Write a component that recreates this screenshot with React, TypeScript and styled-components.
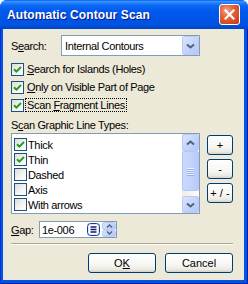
import React from "react";
import styled, { createGlobalStyle } from "styled-components";

const GlobalStyle = createGlobalStyle`
  * { box-sizing: border-box; }
  html, body { margin: 0; padding: 0; background: #ffffff; }
  body { font-family: "Liberation Sans", Arial, sans-serif; }
`;

const Window = styled.div`
  width: 248px;
  height: 284px;
  display: flex;
  flex-direction: column;
  background: #0831d9;
  border-radius: 7px 7px 0 0;
  overflow: hidden;
`;

const TitleBar = styled.div`
  height: 29px;
  flex: none;
  display: flex;
  align-items: center;
  justify-content: space-between;
  padding: 0 8px 0 7px;
  background: linear-gradient(
    to bottom,
    #0058ee 0%,
    #3d95ff 5%,
    #2080fb 10%,
    #0a66f2 20%,
    #0058ee 40%,
    #0055e5 70%,
    #0052dd 88%,
    #0043c4 100%
  );
`;

const Title = styled.span`
  color: #ffffff;
  font-weight: bold;
  font-size: 12px;
  letter-spacing: 0.1px;
  text-shadow: 1px 1px 0 #0a1883;
`;

const CloseButton = styled.div`
  width: 21px;
  height: 21px;
  border: 1px solid #ffffff;
  border-radius: 3px;
  background: radial-gradient(circle at 35% 30%, #f3a287 0%, #e5683f 35%, #d2461f 75%, #c0391a 100%);
  display: flex;
  align-items: center;
  justify-content: center;
`;

const Frame = styled.div`
  flex: 1;
  display: flex;
  padding: 0 4px 4px 3px;
  background: #0054e3;
  box-shadow: inset 1px 0 #0831d9, inset -1px 0 #001ea0, inset 0 -1px #001ea0;
`;

const Body = styled.div`
  flex: 1;
  background: #ece9d8;
  display: flex;
  flex-direction: column;
  padding: 6px 11px 0 8px;
  font-size: 11px;
  letter-spacing: -0.35px;
  color: #000000;
`;

const Row = styled.div<{ $top?: number; $h?: number }>`
  display: flex;
  align-items: center;
  height: ${(p) => p.$h ?? 18}px;
  margin-top: ${(p) => p.$top ?? 0}px;
`;

const FieldLabel = styled.span<{ $w: number }>`
  width: ${(p) => p.$w}px;
  flex: none;
`;

const Combo = styled.div`
  width: 139px;
  height: 21px;
  border: 1px solid #7f9db9;
  background: #ffffff;
  display: flex;
  align-items: stretch;
`;

const ComboText = styled.span`
  flex: 1;
  padding-left: 3px;
  display: flex;
  align-items: center;
`;

const XpArrowBtn = styled.div<{ $w?: number; $h?: number }>`
  width: ${(p) => p.$w ?? 17}px;
  height: ${(p) => (p.$h ? `${p.$h}px` : "auto")};
  flex: none;
  border: 1px solid #bccbf2;
  border-radius: 2px;
  background: linear-gradient(135deg, #dbe6fe 0%, #c7d6fb 45%, #b2c6f5 100%);
  display: flex;
  align-items: center;
  justify-content: center;
`;

const CheckRows = styled.div`
  display: flex;
  flex-direction: column;
  margin-top: 4px;
`;

const Box = styled.span`
  width: 13px;
  height: 13px;
  flex: none;
  border: 1px solid #1c5180;
  background: linear-gradient(135deg, #dcdcd7 0%, #f4f4f1 55%, #ffffff 100%);
  display: inline-flex;
  align-items: center;
  justify-content: center;
`;

const CheckLabel = styled.span<{ $focus?: boolean }>`
  margin-left: 2px;
  padding: 0 1px;
  line-height: 12px;
  outline: ${(p) => (p.$focus ? "1px dotted #000" : "none")};
`;

const Section = styled.div`
  margin-top: 4px;
  height: 14px;
  line-height: 14px;
`;

const ListArea = styled.div`
  display: flex;
  gap: 7px;
  margin-top: 1px;
`;

const ListBox = styled.div`
  width: 189px;
  height: 81px;
  border: 1px solid #7f9db9;
  background: #ffffff;
  display: flex;
`;

const Items = styled.div`
  flex: 1;
  padding: 3px 0 0 2px;
  overflow: hidden;
`;

const Item = styled.div`
  height: 15px;
  display: flex;
  align-items: center;
  gap: 1px;
`;

const ScrollBar = styled.div`
  width: 17px;
  flex: none;
  display: flex;
  flex-direction: column;
  background: linear-gradient(to right, #eeede5, #fdfdfa);
`;

const Track = styled.div`
  flex: 1;
  display: flex;
  flex-direction: column;
`;

const Thumb = styled.div`
  height: 40px;
  border: 1px solid #b4c8f6;
  border-radius: 2px;
  background: linear-gradient(to right, #cad8fc 0%, #c2d3fc 50%, #b8cbf9 100%);
  display: flex;
  flex-direction: column;
  align-items: center;
  justify-content: center;
  gap: 1px;
`;

const Grip = styled.span`
  width: 7px;
  height: 1px;
  background: #eef4fe;
  box-shadow: 0 1px 0 #8cb0f8;
`;

const SideButtons = styled.div`
  display: flex;
  flex-direction: column;
  gap: 4px;
  padding-top: 2px;
`;

const XpButton = styled.div<{ $w: number }>`
  width: ${(p) => p.$w}px;
  height: 20px;
  border: 1px solid #003c74;
  border-radius: 3px;
  background: linear-gradient(to bottom, #ffffff 0%, #f6f6f2 60%, #ecebe5 85%, #d6d0c5 100%);
  display: flex;
  align-items: center;
  justify-content: center;
  letter-spacing: 0;
`;

const Edit = styled.div`
  width: 78px;
  height: 17px;
  border: 1px solid #7f9db9;
  background: #ffffff;
  display: flex;
  align-items: center;
`;

const EditText = styled.span`
  flex: 1;
  padding-left: 2px;
`;

const Spin = styled.div`
  width: 14px;
  align-self: stretch;
  display: flex;
  flex-direction: column;
`;

const SpinHalf = styled.div`
  flex: 1;
  border: 1px solid #bccbf2;
  border-radius: 2px;
  background: linear-gradient(135deg, #dbe6fe 0%, #c7d6fb 45%, #b2c6f5 100%);
  display: flex;
  align-items: center;
  justify-content: center;
`;

const Separator = styled.div`
  margin-top: 5px;
  height: 2px;
  border-top: 1px solid #aca899;
  border-bottom: 1px solid #ffffff;
`;

const ButtonRow = styled.div`
  margin-top: 8px;
  display: flex;
  justify-content: flex-end;
  gap: 9px;
`;

const Chevron = ({ up = false, w = 7 }: { up?: boolean; w?: number }) => (
  <svg width={w + 2} height="6" viewBox={`0 0 ${w + 2} 6`}>
    <path
      d={up ? `M1 4.5 L${(w + 2) / 2} 1.5 L${w + 1} 4.5` : `M1 1.5 L${(w + 2) / 2} 4.5 L${w + 1} 1.5`}
      fill="none"
      stroke="#4d6185"
      strokeWidth="2"
    />
  </svg>
);

const SmallChevron = ({ up = false }: { up?: boolean }) => (
  <svg width="7" height="4" viewBox="0 0 7 4">
    <path d={up ? "M1 3.5 L3.5 1 L6 3.5" : "M1 0.5 L3.5 3 L6 0.5"} fill="none" stroke="#4d6185" strokeWidth="1.4" />
  </svg>
);

const Tick = () => (
  <svg width="9" height="9" viewBox="0 0 9 9">
    <path d="M1 4.2 L3.4 6.6 L8 2" fill="none" stroke="#21a121" strokeWidth="2" />
  </svg>
);

const CloseX = () => (
  <svg width="11" height="11" viewBox="0 0 11 11">
    <path d="M1.5 1.5 L9.5 9.5 M9.5 1.5 L1.5 9.5" stroke="#ffffff" strokeWidth="2.2" strokeLinecap="square" />
  </svg>
);

const ListIcon = () => (
  <svg width="13" height="13" viewBox="0 0 13 13" style={{ marginRight: 2, flex: "none" }}>
    <rect x="0.5" y="0.5" width="12" height="12" rx="3" fill="#dde7fb" stroke="#1b3b9c" />
    <rect x="2" y="2" width="9" height="9" rx="1.5" fill="#ffffff" />
    <path d="M3.5 4 H9.5 M3.5 6.5 H9.5 M3.5 9 H9.5" stroke="#101a6a" strokeWidth="1.4" />
  </svg>
);

const Check = ({ checked }: { checked: boolean }) => <Box>{checked ? <Tick /> : null}</Box>;

const items: { label: string; checked: boolean }[] = [
  { label: "Thick", checked: true },
  { label: "Thin", checked: true },
  { label: "Dashed", checked: false },
  { label: "Axis", checked: false },
  { label: "With arrows", checked: false },
];

export default function App() {
  return (
    <>
      <GlobalStyle />
      <Window>
        <TitleBar>
          <Title>Automatic Contour Scan</Title>
          <CloseButton>
            <CloseX />
          </CloseButton>
        </TitleBar>
        <Frame>
          <Body>
            <Row $h={21}>
              <FieldLabel $w={50}>
                S<u>e</u>arch:
              </FieldLabel>
              <Combo>
                <ComboText>Internal Contours</ComboText>
                <XpArrowBtn>
                  <Chevron />
                </XpArrowBtn>
              </Combo>
            </Row>
            <CheckRows>
              <Row>
                <Check checked />
                <CheckLabel>
                  <u>S</u>earch for Islands (Holes)
                </CheckLabel>
              </Row>
              <Row>
                <Check checked />
                <CheckLabel>
                  <u>O</u>nly on Visible Part of Page
                </CheckLabel>
              </Row>
              <Row>
                <Check checked />
                <CheckLabel $focus>
                  Scan <u>F</u>ragment Lines
                </CheckLabel>
              </Row>
            </CheckRows>
            <Section>
              S<u>c</u>an Graphic Line Types:
            </Section>
            <ListArea>
              <ListBox>
                <Items>
                  {items.map((it) => (
                    <Item key={it.label}>
                      <Check checked={it.checked} />
                      <span>{it.label}</span>
                    </Item>
                  ))}
                </Items>
                <ScrollBar>
                  <XpArrowBtn $h={17}>
                    <Chevron up />
                  </XpArrowBtn>
                  <Track>
                    <Thumb>
                      <Grip />
                      <Grip />
                      <Grip />
                      <Grip />
                    </Thumb>
                  </Track>
                  <XpArrowBtn $h={17}>
                    <Chevron />
                  </XpArrowBtn>
                </ScrollBar>
              </ListBox>
              <SideButtons>
                <XpButton $w={26}>+</XpButton>
                <XpButton $w={26}>-</XpButton>
                <XpButton $w={26}>+ / -</XpButton>
              </SideButtons>
            </ListArea>
            <Row $h={17} $top={7}>
              <FieldLabel $w={28}>
                <u>G</u>ap:
              </FieldLabel>
              <Edit>
                <EditText>1e-006</EditText>
                <ListIcon />
                <Spin>
                  <SpinHalf>
                    <SmallChevron up />
                  </SpinHalf>
                  <SpinHalf>
                    <SmallChevron />
                  </SpinHalf>
                </Spin>
              </Edit>
            </Row>
            <Separator />
            <ButtonRow>
              <XpButton $w={68}>
                O<u>K</u>
              </XpButton>
              <XpButton $w={68}>Cancel</XpButton>
            </ButtonRow>
          </Body>
        </Frame>
      </Window>
    </>
  );
}
